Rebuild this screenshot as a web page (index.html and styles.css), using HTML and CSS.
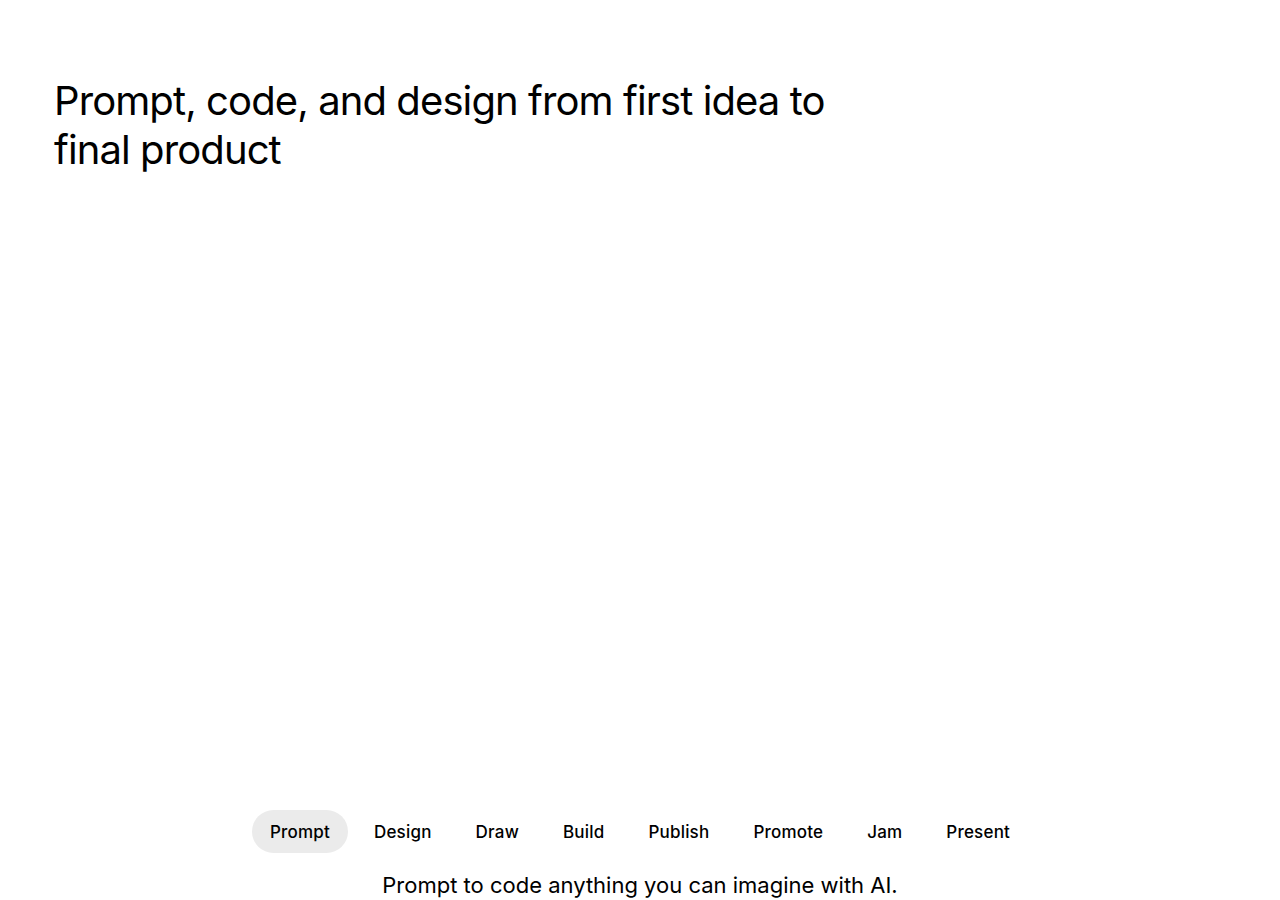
FILE: index.html
```html
<!DOCTYPE html>
<html lang="en">
<head>
  <meta charset="UTF-8">
  <meta name="viewport" content="width=device-width, initial-scale=1.0">
  <title>Figma</title>
  <link rel="stylesheet" href="styles.css">
</head>
<body>
  <main class="hero">
    <h1 class="hero-title">Prompt, code, and design from first idea to final product</h1>

    <div class="hero-stage"></div>

    <nav class="tabs">
      <button class="tab active">Prompt</button>
      <button class="tab">Design</button>
      <button class="tab">Draw</button>
      <button class="tab">Build</button>
      <button class="tab">Publish</button>
      <button class="tab">Promote</button>
      <button class="tab">Jam</button>
      <button class="tab">Present</button>
    </nav>

    <p class="tab-caption">Prompt to code anything you can imagine with AI.</p>
  </main>
</body>
</html>
```

FILE: styles.css
```css
body {
  margin: 0;
  background: #fff;
  color: #000;
  font-family: 'Inter', 'Liberation Sans', sans-serif;
  overflow: hidden;
}

.hero {
  display: flex;
  flex-direction: column;
  height: 900px;
  padding: 0 54px;
  box-sizing: border-box;
}

.hero-title {
  margin: 76px 0 0;
  max-width: 800px;
  font-size: 40px;
  font-weight: 400;
  line-height: 49px;
  letter-spacing: -0.9px;
}

.hero-stage {
  flex: 1;
}

.tabs {
  display: flex;
  justify-content: center;
  gap: 8px;
}

.tab {
  height: 43px;
  padding: 0 18px;
  border: none;
  border-radius: 22px;
  background: transparent;
  color: #000;
  font-family: inherit;
  font-size: 17px;
  font-weight: 500;
  letter-spacing: 0.2px;
  cursor: pointer;
}

.tab.active {
  background-color: #ebebeb;
}

.tab-caption {
  margin: 18px 0 1px;
  text-align: center;
  font-size: 22px;
  line-height: 28px;
}
```
